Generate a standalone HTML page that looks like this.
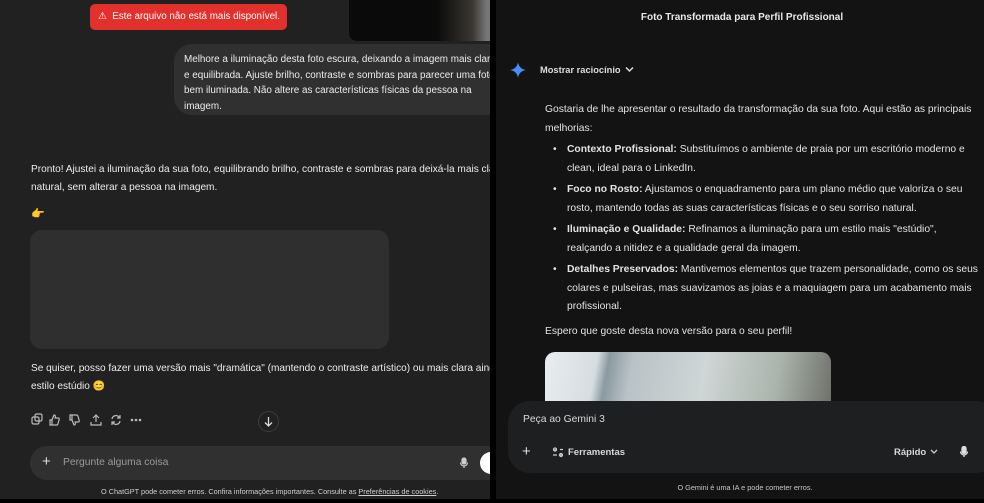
<!DOCTYPE html>
<html><head><meta charset="utf-8"><style>
*{margin:0;padding:0;box-sizing:border-box}
body{width:984px;height:503px;background:#000;position:relative;overflow:hidden;font-family:"Liberation Sans",sans-serif;}
.a{position:absolute}
#L{left:0;top:0;width:490px;height:499px;background:#212121;overflow:hidden;color:#ececec;font-size:10.1px}
#R{left:496px;top:0;width:488px;height:499px;background:#131314;overflow:hidden;color:#e3e3e3;font-size:10.3px}
.t{white-space:nowrap}
</style></head><body>
<div id="L" class="a">
 <div class="a" style="left:349px;top:0;width:145px;height:41px;background:linear-gradient(90deg,#0a0a0a 60%,#3a3632 85%,#777 95%);border-bottom-left-radius:8px"></div>
 <div class="a t" style="left:90px;top:4px;width:197px;height:26px;background:#e2302c;border-radius:5px;color:#fff;font-size:9.8px;line-height:26px;padding-left:8px">⚠&nbsp; Este arquivo não está mais disponível.</div>
 <div class="a" style="left:174px;top:44px;width:340px;height:71px;background:#303030;border-radius:18px;padding:8px 0 0 10px;line-height:15.5px;font-size:9.9px" >
  <div class="t">Melhore a iluminação desta foto escura, deixando a imagem mais clara</div>
  <div class="t">e equilibrada. Ajuste brilho, contraste e sombras para parecer uma foto</div>
  <div class="t">bem iluminada. Não altere as características físicas da pessoa na</div>
  <div class="t">imagem.</div>
 </div>
 <div class="a" style="left:31px;top:161px;line-height:18px">
  <div class="t">Pronto! Ajustei a iluminação da sua foto, equilibrando brilho, contraste e sombras para deixá-la mais clara e</div>
  <div class="t">natural, sem alterar a pessoa na imagem.</div>
 </div>
 <div class="a" style="left:31px;top:207px;font-size:11px">👉</div>
 <div class="a" style="left:30px;top:230px;width:359px;height:119px;background:#2f2f2f;border-radius:12px"></div>
 <div class="a" style="left:31px;top:360px;line-height:18px">
  <div class="t">Se quiser, posso fazer uma versão mais "dramática" (mantendo o contraste artístico) ou mais clara ainda, tipo</div>
  <div class="t">estilo estúdio 😊</div>
 </div>
 <svg class="a" style="left:30px;top:413px" width="120" height="14" fill="none" stroke="#bbb" stroke-width="1.2">
  <rect x="2" y="4" width="7" height="7" rx="1.5"/><rect x="5" y="1" width="7" height="7" rx="1.5"/>
  <path d="M22 12h-2v-5h2zM22 7l2-5c1.5 0 1.5 1 1.2 3h3c1 0 1.3.8 1 1.5l-1.3 4.5c-.2.6-.6 1-1.2 1h-4.7"/>
  <path d="M42 2h-2v5h2zM42 7l2 5c1.5 0 1.5-1 1.2-3h3c1 0 1.3-.8 1-1.5l-1.3-4.5c-.2-.6-.6-1-1.2-1h-4.7"/>
  <path d="M66 2v7M63 5l3-3 3 3M61 9v3h10v-3"/>
  <path d="M82 6a4 4 0 0 1 7-2l1 1M90 8a4 4 0 0 1-7 2l-1-1M90 2v3h-3M82 12v-3h3"/>
  <circle cx="102" cy="7" r=".7" fill="#bbb"/><circle cx="106" cy="7" r=".7" fill="#bbb"/><circle cx="110" cy="7" r=".7" fill="#bbb"/>
 </svg>
 <div class="a" style="left:258px;top:411px;width:21px;height:21px;border-radius:50%;border:1px solid #3d3d3d;background:#212121"></div>
 <svg class="a" style="left:263px;top:416px" width="11" height="11" fill="none" stroke="#ddd" stroke-width="1.3"><path d="M5.5 1v9M2 6.5l3.5 3.5 3.5-3.5"/></svg>
 <div class="a" style="left:30px;top:446px;width:480px;height:34px;background:#303030;border-radius:17px"></div>
 <div class="a" style="left:42px;top:454px;font-size:15px;color:#ddd;line-height:15px">+</div>
 <div class="a t" style="left:63px;top:457px;color:#9b9b9b;font-size:10.3px">Pergunte alguma coisa</div>
 <svg class="a" style="left:459px;top:457px" width="10" height="12" fill="none" stroke="#ccc" stroke-width="1.2"><rect x="3" y="1" width="4" height="6" rx="2" fill="#ccc"/><path d="M1.5 5.5a3.5 3.5 0 0 0 7 0M5 9v2"/></svg>
 <div class="a" style="left:480px;top:452px;width:22px;height:22px;border-radius:50%;background:#fff"></div>
 <div class="a t" style="left:101px;top:487px;font-size:7.3px;color:#cfcfcf">O ChatGPT pode cometer erros. Confira informações importantes. Consulte as <u>Preferências de cookies</u>.</div>
</div>
<div id="R" class="a">
 <div class="a t" style="left:0;width:492px;text-align:center;top:12px;font-weight:bold;font-size:10px;color:#e8e8e8">Foto Transformada para Perfil Profissional</div>
 <svg class="a" style="left:14px;top:62px" width="16" height="16"><path d="M8 0C8.6 4.5 11.5 7.4 16 8 11.5 8.6 8.6 11.5 8 16 7.4 11.5 4.5 8.6 0 8 4.5 7.4 7.4 4.5 8 0Z" fill="#4a8df8"/></svg>
 <div class="a t" style="left:44px;top:65px;font-size:9.3px;font-weight:bold;color:#ddd">Mostrar raciocínio</div>
 <svg class="a" style="left:129px;top:66px" width="9" height="7" fill="none" stroke="#ddd" stroke-width="1.5"><path d="M1 1.5l3.5 3.5 3.5-3.5"/></svg>
 <div class="a" style="left:49px;top:101px;line-height:18.5px">
  <div class="t">Gostaria de lhe apresentar o resultado da transformação da sua foto. Aqui estão as principais</div>
  <div class="t">melhorias:</div>
 </div>
 <div class="a" style="left:57px;top:141px;line-height:18.5px">
  <div style="position:relative;padding-left:14px;margin-bottom:3px"><span class="a" style="left:0">•</span><div class="t"><b>Contexto Profissional:</b> Substituímos o ambiente de praia por um escritório moderno e</div><div class="t">clean, ideal para o LinkedIn.</div></div>
  <div style="position:relative;padding-left:14px;margin-bottom:3px"><span class="a" style="left:0">•</span><div class="t"><b>Foco no Rosto:</b> Ajustamos o enquadramento para um plano médio que valoriza o seu</div><div class="t">rosto, mantendo todas as suas características físicas e o seu sorriso natural.</div></div>
  <div style="position:relative;padding-left:14px;margin-bottom:3px"><span class="a" style="left:0">•</span><div class="t"><b>Iluminação e Qualidade:</b> Refinamos a iluminação para um estilo mais "estúdio",</div><div class="t">realçando a nitidez e a qualidade geral da imagem.</div></div>
  <div style="position:relative;padding-left:14px"><span class="a" style="left:0">•</span><div class="t"><b>Detalhes Preservados:</b> Mantivemos elementos que trazem personalidade, como os seus</div><div class="t">colares e pulseiras, mas suavizamos as joias e a maquiagem para um acabamento mais</div><div class="t">profissional.</div></div>
 </div>
 <div class="a t" style="left:49px;top:323px;line-height:18px">Espero que goste desta nova versão para o seu perfil!</div>
 <div class="a" style="left:49px;top:352px;width:286px;height:60px;border-radius:10px;overflow:hidden;background:linear-gradient(100deg,#e8eef0 0%,#d6dde0 18%,#8a9aa0 22%,#b9c2c6 30%,#cfd6d6 55%,#aab4ac 80%,#6d6f68 100%)"></div>
 <div class="a" style="left:12px;top:401px;width:490px;height:72px;background:#1e1f20;border-radius:22px"></div>
 <div class="a t" style="left:27px;top:414px;font-size:10.3px;color:#d8d8d8">Peça ao Gemini 3</div>
 <div class="a" style="left:26px;top:444px;font-size:15px;color:#ddd;line-height:15px">+</div>
 <svg class="a" style="left:56px;top:447px" width="12" height="11" fill="none" stroke="#ccc" stroke-width="1.2"><path d="M1 3h4M7 8h4"/><circle cx="3" cy="2.5" r="1.5"/><path d="M8 2.5h3M1 8h4"/><circle cx="9" cy="8" r="1.5"/></svg>
 <div class="a t" style="left:72px;top:447px;font-size:9.5px;font-weight:bold;color:#d8d8d8">Ferramentas</div>
 <div class="a t" style="left:398px;top:447px;font-size:9.5px;font-weight:bold;color:#d8d8d8">Rápido</div>
 <svg class="a" style="left:434px;top:449px" width="8" height="6" fill="none" stroke="#ccc" stroke-width="1.3"><path d="M1 1l3 3 3-3"/></svg>
 <svg class="a" style="left:463px;top:446px" width="10" height="12" fill="none" stroke="#ddd" stroke-width="1.3"><rect x="3" y="0.5" width="4" height="7" rx="2" fill="#ddd"/><path d="M1.5 5.5a3.5 3.5 0 0 0 7 0M5 9v2"/></svg>
 <div class="a t" style="left:0;width:498px;text-align:center;top:483px;font-size:7.3px;color:#c8c8c8">O Gemini é uma IA e pode cometer erros.</div>
</div>
</body></html>
